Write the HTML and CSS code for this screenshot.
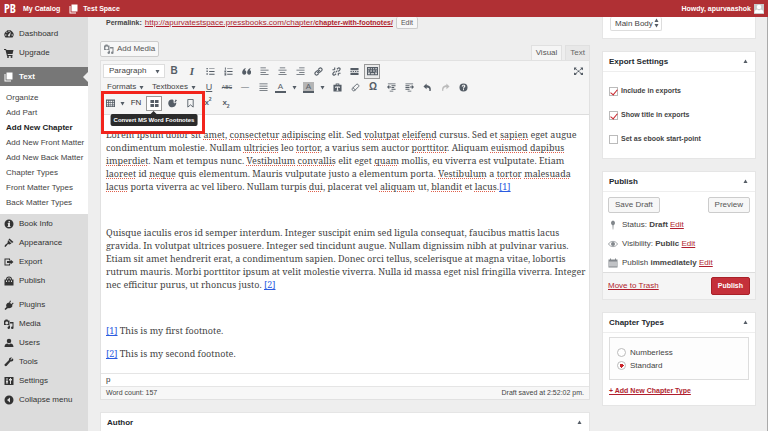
FILE: index.html
```html
<!DOCTYPE html>
<html lang="en">
  <head>
    <meta charset="UTF-8" />
    <meta name="viewport" content="width=device-width, initial-scale=1.0" />
    <title>Edit Chapter</title>
    <link rel="stylesheet" href="styles.css">
  </head>
  <body>
    <svg class="sprite" aria-hidden="true">
      <symbol id="i-book" viewBox="0 0 20 20"><path d="M5 1h12v14H5z" /><path d="M3 4v13h11v2H1V4z" /></symbol>
      <symbol id="i-dash" viewBox="0 0 20 20"><path fill-rule="evenodd" d="M3 17a9 9 0 1 1 14 0zM9 3v3h2V3zM4 6l2 2 1-1-2-2zM2 11v2h3v-2zM15 11v2h3v-2zM14 5l-5 6a2 2 0 1 0 3 2z" /></symbol>
      <symbol id="i-cart" viewBox="0 0 20 20"><path d="M0 2h4l1 2h14l-2 8H7l1 2h9v2H6L3 4H0z" /><circle cx="8" cy="18" r="2" /><circle cx="15" cy="18" r="2" /></symbol>
      <symbol id="i-info" viewBox="0 0 20 20"><path fill-rule="evenodd" d="M10 1a9 9 0 1 0 0 18 9 9 0 0 0 0-18zM9 4h3v3H9zM8 8h4v6h1v2H7v-2h1v-4H7z" /></symbol>
      <symbol id="i-brush" viewBox="0 0 20 20"><path d="M11 1l8 7-3 2-7-7zM8 4l7 7-4 2-3-1-5 6-2-1 1-3 5-4z" /></symbol>
      <symbol id="i-export" viewBox="0 0 20 20"><path d="M1 3h11v4h-2V5H3v10h7v-2h2v4H1z" /><path d="M6 8h7V5l6 5-6 5v-3H6z" /></symbol>
      <symbol id="i-bag" viewBox="0 0 20 20"><path fill-rule="evenodd" d="M1 7h3a6 6 0 0 1 12 0h3v12H1zM6 7h2a2 3 0 0 1 4 0h2a4 4 0 0 0-8 0zM4 9v3h2V9zM9 9v3h2V9zM14 9v3h2V9z" /></symbol>
      <symbol id="i-plug" viewBox="0 0 20 20"><path d="M12 1l2 1-2 4 3 2 3-3 1 2-3 3 1 2c-2 4-6 5-9 4l-5 4-2-2 4-4C3 10 5 6 9 5l1 1z" /></symbol>
      <symbol id="i-media" viewBox="0 0 20 20"><path fill-rule="evenodd" d="M0 3h2l1-2h4l1 2h3v9H0zM5 5a3 3 0 1 0 1 0z" /><path d="M12 6h7v11a2.500 2.500 0 1 1-2-2V9h-5zM9 13h3v4a2.500 2.500 0 1 1-3-2z" /></symbol>
      <symbol id="i-user" viewBox="0 0 20 20"><circle cx="10" cy="6" r="4.500" /><path d="M1 18c0-5 3-7 6-7l3 2 3-2c3 0 6 2 6 7z" /></symbol>
      <symbol id="i-wrench" viewBox="0 0 20 20"><path d="M17 3l-3 3-1-1 3-4c-4-1-7 2-6 5l-9 9c-1 2 2 4 4 3l8-9c4 1 7-2 5-6z" /></symbol>
      <symbol id="i-sliders" viewBox="0 0 20 20"><path fill-rule="evenodd" d="M1 2h18v16H1zM5 4v6H4v3h1v3h2v-3h1v-3H7V4zM12 4v2h-2v3h2v7h2V9h2V6h-2V4z" /></symbol>
      <symbol id="i-collapse" viewBox="0 0 20 20"><path fill-rule="evenodd" d="M10 1a9 9 0 1 0 0 18 9 9 0 0 0 0-18zM12 5v10l-6-5z" /></symbol>
      <symbol id="i-ul" viewBox="0 0 20 20"><path d="M1 2h3v3H1zM7 3h12v1H7zM1 8h3v3H1zM7 9h12v2H7zM1 14h3v3H1zM7 15h12v2H7z" /></symbol>
      <symbol id="i-ol" viewBox="0 0 20 20"><path d="M2 1h2v5H2zM7 3h12v1H7zM1 8h4v2L3 11h2v1H1zM7 9h12v2H7zM1 14h4v5H1v-1h2v-1H1zM7 15h12v2H7z" /></symbol>
      <symbol id="i-quote" viewBox="0 0 20 20"><path d="M8 2v2L6 7c5 0 5 10-1 10-7 0-6-12 3-15zM19 2v2l-2 3c5 0 4 10-1 10-7 0-6-12 3-15z" /></symbol>
      <symbol id="i-left" viewBox="0 0 20 20"><path d="M1 1h12v2H1zM1 6h18v2H1zM1 11h12v2H1zM1 16h18v2H1z" /></symbol>
      <symbol id="i-center" viewBox="0 0 20 20"><path d="M4 1h12v2H4zM1 6h18v2H1zM4 11h12v2H4zM1 16h18v2H1z" /></symbol>
      <symbol id="i-right" viewBox="0 0 20 20"><path d="M7 1h12v2H7zM1 6h18v2H1zM7 11h12v2H7zM1 16h18v2H1z" /></symbol>
      <symbol id="i-justify" viewBox="0 0 20 20"><path d="M1 1h18v2H1zM1 6h18v2H1zM1 11h18v2H1zM1 16h18v2H1z" /></symbol>
      <symbol id="i-link" viewBox="0 0 20 20"><g fill="none" stroke="currentColor" stroke-width="2.500"><path d="M9 6l3-3c3-3 8 1 5 5l-3 3c-2 2-4 1-5 0M11 14l-3 3c-3 3-8-1-5-5l3-3c2-2 4-1 5 0M7 13l6-6" /></g></symbol>
      <symbol id="i-unlink" viewBox="0 0 20 20"><g fill="none" stroke="currentColor" stroke-width="2.500"><path d="M11 5l2-2c3-3 7 1 4 4l-3 3M9 15l-2 2c-3 3-7-1-4-4l3-3M6 1v5M1 6h5M14 14v5M14 14h5M8 12l4-4" /></g></symbol>
      <symbol id="i-more" viewBox="0 0 20 20"><path d="M1 2h18v5H1zM1 9h3v2H1zM6 9h3v2H6zM11 9h3v2h-3zM16 9h3v2h-3zM1 13h18v5H1z" /></symbol>
      <symbol id="i-keys" viewBox="0 0 20 20"><path fill-rule="evenodd" d="M0 2h20v15H0zM2 4v2h3V4zM7 4v2h2V4zM11 4v2h2V4zM15 4v2h3V4zM2 8v2h2V8zM6 8v2h3V8zM11 8v2h3V8zM16 8v2h2V8zM2 12v3h3v-3zM7 13v2h6v-2zM15 12v3h3v-3z" /></symbol>
      <symbol id="i-full" viewBox="0 0 20 20"><path d="M0 1h6L4 3l4 4-1 1-4-3-3 2zM20 1h-6l2 2-4 4 1 1 4-3 3 2zM0 18h6l-2-2 4-3-1-2-4 3-3-2zM20 18h-6l2-2-4-3 1-2 4 3 3-2zM8 8h4v3H8z" /></symbol>
      <symbol id="i-paste" viewBox="0 0 20 20"><path fill-rule="evenodd" d="M1 4h5V1h8v3h5v15H1zM8 3v1h4V3zM5 8v3h2v-1h2v5H8v2h4v-2h-1v-5h2v1h2V8z" /></symbol>
      <symbol id="i-eraser" viewBox="0 0 20 20"><path fill="none" stroke="currentColor" stroke-width="2" d="M3 12l9-9c2-2 7 2 5 5l-9 9c-3 2-7-2-5-5zM4 10l6 6" /></symbol>
      <symbol id="i-outdent" viewBox="0 0 20 20"><path d="M2 1h17v2H2zM10 5h9v2h-9zM10 9h6v2h-6zM10 13h9v2h-9zM6 17h8v2H6zM0 9l5-5v4h4v2H5v4z" /></symbol>
      <symbol id="i-indent" viewBox="0 0 20 20"><path d="M1 1h17v2H1zM1 5h9v2H1zM1 9h9v2H1zM1 13h9v2H1zM6 17h8v2H6zM20 9l-5-5v4h-4v2h4v4z" /></symbol>
      <symbol id="i-undo" viewBox="0 0 20 20"><path d="M8 1v4c7 0 11 5 9 13h-3c1-6-1-8-6-8v4L1 8z" /></symbol>
      <symbol id="i-redo" viewBox="0 0 20 20"><path d="M12 1v4C5 5 1 10 3 18h2c0-6 2-9 7-9v5l7-6z" /></symbol>
      <symbol id="i-help" viewBox="0 0 20 20"><path fill-rule="evenodd" d="M10 1a9 9 0 1 0 0 18 9 9 0 0 0 0-18zM6 8c0-6 9-5 8-1 0 3-3 2-3 5H9c0-4 3-4 2-6-1-1-2 0-2 2zM9 13h2v3H9z" /></symbol>
      <symbol id="i-table" viewBox="0 0 20 20"><path fill-rule="evenodd" d="M0 1h20v17H0zM2 4v3h3V4zM7 4v3h3V4zM11 4v3h3V4zM16 4v3h2V4zM2 9v3h3V9zM7 9v3h3V9zM11 9v3h3V9zM16 9v3h2V9zM2 14v2h3v-2zM7 14v2h3v-2zM11 14v2h3v-2zM16 14v2h2v-2z" /></symbol>
      <symbol id="i-grid" viewBox="0 0 20 20"><path d="M1 2h8v7H1zM11 2h8v7h-8zM1 11h8v7H1zM11 11h8v7h-8z" /></symbol>
      <symbol id="i-palette" viewBox="0 0 20 20"><path d="M12 2C4-1-1 6 1 12c2 8 13 8 16 2 1-3 2-4 1-6-2 2-4 2-5 1s0-4-1-7z" /><path d="M14 7l3-6 3 2-4 5z" /></symbol>
      <symbol id="i-mark" viewBox="0 0 20 20"><path fill="none" stroke="currentColor" stroke-width="2" d="M4 1h12v17l-6-5-6 5z" /></symbol>
      <symbol id="i-pin" viewBox="0 0 20 20"><path d="M10 1a5 5 0 0 1 1 9.500L10.500 19h-1L9 10.500A5 5 0 0 1 10 1z" /></symbol>
      <symbol id="i-eye" viewBox="0 0 20 20"><path fill="none" stroke="currentColor" stroke-width="1.500" d="M1 10c4-7 14-7 18 0-4 7-14 7-18 0z" /><circle cx="10" cy="10" r="4" /></symbol>
      <symbol id="i-cal" viewBox="0 0 20 20"><path fill-rule="evenodd" d="M1 3h3V1h2v2h8V1h2v2h3v16H1zM3 7v10h2V7zM7 7v10h2V7zM11 7v10h2V7zM15 7v10h2V7z" /></symbol>
      <symbol id="i-caret" viewBox="0 0 10 10"><path d="M1 2h8L5 9z" /></symbol>
    </svg>

    <header class="adminBar">
      <a href="#" class="logo">PB</a>
      <a href="#">My Catalog</a>
      <a href="#" class="site"><svg class="icon"><use href="#i-book" /></svg>Test Space</a>
      <a href="#" class="account">Howdy, apurvaashok
        <span class="avatar"><svg class="icon"><use href="#i-user" /></svg></span>
      </a>
    </header>

    <div class="page">
      <nav class="sidebar">
        <ul class="menu">
          <li><a href="#"><svg class="icon"><use href="#i-dash" /></svg>Dashboard</a></li>
          <li><a href="#"><svg class="icon"><use href="#i-cart" /></svg>Upgrade</a></li>
          <li class="active"><a href="#"><svg class="icon"><use href="#i-book" /></svg>Text</a></li>
        </ul>
        <ul class="submenu">
          <li><a href="#">Organize</a></li>
          <li><a href="#">Add Part</a></li>
          <li class="current"><a href="#">Add New Chapter</a></li>
          <li><a href="#">Add New Front Matter</a></li>
          <li><a href="#">Add New Back Matter</a></li>
          <li><a href="#">Chapter Types</a></li>
          <li><a href="#">Front Matter Types</a></li>
          <li><a href="#">Back Matter Types</a></li>
        </ul>
        <ul class="menu">
          <li><a href="#"><svg class="icon"><use href="#i-info" /></svg>Book Info</a></li>
          <li><a href="#"><svg class="icon"><use href="#i-brush" /></svg>Appearance</a></li>
          <li><a href="#"><svg class="icon"><use href="#i-export" /></svg>Export</a></li>
          <li><a href="#"><svg class="icon"><use href="#i-bag" /></svg>Publish</a></li>
          <li class="group"><a href="#"><svg class="icon"><use href="#i-plug" /></svg>Plugins</a></li>
          <li><a href="#"><svg class="icon"><use href="#i-media" /></svg>Media</a></li>
          <li><a href="#"><svg class="icon"><use href="#i-user" /></svg>Users</a></li>
          <li><a href="#"><svg class="icon"><use href="#i-wrench" /></svg>Tools</a></li>
          <li><a href="#"><svg class="icon"><use href="#i-sliders" /></svg>Settings</a></li>
          <li><button class="collapse"><svg class="icon"><use href="#i-collapse" /></svg>Collapse menu</button></li>
        </ul>
      </nav>

      <main class="content">
        <div class="permalink">
          <strong>Permalink:</strong>
          <a href="#">http://apurvatestspace.pressbooks.com/chapter/<b>chapter-with-footnotes/</b></a>
          <button class="btn small">Edit</button>
        </div>
        <div class="editorTop">
          <button class="btn addMedia"><svg class="icon"><use href="#i-media" /></svg>Add Media</button>
          <div class="tabs">
            <button class="tab active">Visual</button>
            <button class="tab">Text</button>
          </div>
        </div>

        <section class="editor">
          <div class="toolbar">
            <div class="row">
              <button class="format">Paragraph <svg class="caret"><use href="#i-caret" /></svg></button>
              <button class="tool bold">B</button>
              <button class="tool italic">I</button>
              <button class="tool" aria-label="Bulleted list"><svg class="icon"><use href="#i-ul" /></svg></button>
              <button class="tool" aria-label="Numbered list"><svg class="icon"><use href="#i-ol" /></svg></button>
              <button class="tool" aria-label="Blockquote"><svg class="icon"><use href="#i-quote" /></svg></button>
              <button class="tool" aria-label="Align left"><svg class="icon"><use href="#i-left" /></svg></button>
              <button class="tool" aria-label="Align center"><svg class="icon"><use href="#i-center" /></svg></button>
              <button class="tool" aria-label="Align right"><svg class="icon"><use href="#i-right" /></svg></button>
              <button class="tool" aria-label="Insert link"><svg class="icon"><use href="#i-link" /></svg></button>
              <button class="tool" aria-label="Remove link"><svg class="icon"><use href="#i-unlink" /></svg></button>
              <button class="tool" aria-label="Read more"><svg class="icon"><use href="#i-more" /></svg></button>
              <button class="tool pressed" aria-label="Toolbar toggle"><svg class="icon"><use href="#i-keys" /></svg></button>
              <button class="tool fullscreen" aria-label="Fullscreen"><svg class="icon"><use href="#i-full" /></svg></button>
            </div>
            <div class="row">
              <button class="drop formats">Formats <svg class="caret"><use href="#i-caret" /></svg></button>
              <button class="drop textboxes">Textboxes <svg class="caret"><use href="#i-caret" /></svg></button>
              <button class="tool underline">U</button>
              <button class="tool strike">ABC</button>
              <button class="tool">—</button>
              <button class="tool" aria-label="Justify"><svg class="icon"><use href="#i-justify" /></svg></button>
              <button class="tool split"><span class="color">A</span><svg class="caret"><use href="#i-caret" /></svg></button>
              <button class="tool split"><span class="color filled">A</span><svg class="caret"><use href="#i-caret" /></svg></button>
              <button class="tool" aria-label="Paste as text"><svg class="icon"><use href="#i-paste" /></svg></button>
              <button class="tool" aria-label="Clear formatting"><svg class="icon"><use href="#i-eraser" /></svg></button>
              <button class="tool omega">Ω</button>
              <button class="tool" aria-label="Outdent"><svg class="icon"><use href="#i-outdent" /></svg></button>
              <button class="tool" aria-label="Indent"><svg class="icon"><use href="#i-indent" /></svg></button>
              <button class="tool" aria-label="Undo"><svg class="icon"><use href="#i-undo" /></svg></button>
              <button class="tool disabled" aria-label="Redo"><svg class="icon"><use href="#i-redo" /></svg></button>
              <button class="tool" aria-label="Help"><svg class="icon"><use href="#i-help" /></svg></button>
            </div>
            <div class="row">
              <button class="tool table" aria-label="Table"><svg class="icon"><use href="#i-table" /></svg><svg class="caret"><use href="#i-caret" /></svg></button>
              <button class="tool fn">FN</button>
              <div class="tipWrap">
                <button class="tool hovered" aria-label="Convert footnotes"><svg class="icon"><use href="#i-grid" /></svg></button>
                <span class="tooltip">Convert MS Word Footnotes</span>
              </div>
              <button class="tool" aria-label="Theme"><svg class="icon"><use href="#i-palette" /></svg></button>
              <button class="tool" aria-label="Anchor"><svg class="icon"><use href="#i-mark" /></svg></button>
              <button class="tool script"><span>x<sup>2</sup></span></button>
              <button class="tool script"><span>x<sub>2</sub></span></button>
            </div>
            <div class="highlight"></div>
          </div>

          <div class="text">
            <p>
              Lorem ipsum dolor sit <u>amet</u>, <u>consectetur</u> <u>adipiscing</u> elit. Sed <u>volutpat</u> <u>eleifend</u> cursus. Sed et <u>sapien</u> eget augue<br>
              condimentum molestie. Nullam <u>ultricies</u> leo <u>tortor</u>, a varius sem auctor <u>porttitor</u>. Aliquam <u>euismod</u> <u>dapibus</u><br>
              <u>imperdiet</u>. Nam et tempus nunc. <u>Vestibulum</u> <u>convallis</u> elit eget <u>quam</u> mollis, eu viverra est vulputate. Etiam<br>
              <u>laoreet</u> id <u>neque</u> quis elementum. Mauris vulputate justo a elementum porta. <u>Vestibulum</u> a <u>tortor</u> <u>malesuada</u><br>
              <u>lacus</u> porta viverra ac vel libero. Nullam turpis <u>dui</u>, placerat vel <u>aliquam</u> ut, <u>blandit</u> et <u>lacus</u>.<a href="#">[1]</a>
            </p>
            <p>&nbsp;</p>
            <p>
              Quisque iaculis eros id semper interdum. Integer suscipit enim sed ligula consequat, faucibus mattis lacus<br>
              gravida. In volutpat ultrices posuere. Integer sed tincidunt augue. Nullam dignissim nibh at pulvinar varius.<br>
              Etiam sit amet hendrerit erat, a condimentum sapien. Donec orci tellus, scelerisque at magna vitae, lobortis<br>
              rutrum mauris. Morbi porttitor ipsum at velit molestie viverra. Nulla id massa eget nisl fringilla viverra. Integer<br>
              nec efficitur purus, ut rhoncus justo. <a href="#">[2]</a>
            </p>
            <p>&nbsp;</p>
            <p><a href="#">[1]</a> This is my first footnote.</p>
            <p><a href="#">[2]</a> This is my second footnote.</p>
          </div>
          <div class="path">p</div>
          <div class="status"><span>Word count: 157</span><span>Draft saved at 2:52:02 pm.</span></div>
        </section>

        <section class="box">
          <h2>Author <svg class="caret up"><use href="#i-caret" /></svg></h2>
        </section>
      </main>

      <aside class="side">
        <section class="box part">
          <select aria-label="Part"><option>Main Body</option></select>
          <span class="arrows"><svg class="caret up"><use href="#i-caret" /></svg><svg class="caret"><use href="#i-caret" /></svg></span>
        </section>

        <section class="box">
          <h2>Export Settings <svg class="caret up"><use href="#i-caret" /></svg></h2>
          <div class="checks">
            <label><input type="checkbox" checked> Include in exports</label>
            <label><input type="checkbox" checked> Show title in exports</label>
            <label><input type="checkbox"> Set as ebook start-point</label>
          </div>
        </section>

        <section class="box">
          <h2>Publish <svg class="caret up"><use href="#i-caret" /></svg></h2>
          <div class="publish">
            <div class="actions">
              <button class="btn">Save Draft</button>
              <button class="btn">Preview</button>
            </div>
            <p><svg class="icon"><use href="#i-pin" /></svg><span>Status: <b>Draft</b> <a href="#">Edit</a></span></p>
            <p><svg class="icon"><use href="#i-eye" /></svg><span>Visibility: <b>Public</b> <a href="#">Edit</a></span></p>
            <p><svg class="icon"><use href="#i-cal" /></svg><span>Publish <b>immediately</b> <a href="#">Edit</a></span></p>
          </div>
          <div class="major">
            <a href="#">Move to Trash</a>
            <button class="btn primary">Publish</button>
          </div>
        </section>

        <section class="box">
          <h2>Chapter Types <svg class="caret up"><use href="#i-caret" /></svg></h2>
          <div class="types">
            <div class="radios">
              <label><input type="radio" name="type"> Numberless</label>
              <label><input type="radio" name="type" checked> Standard</label>
            </div>
            <a href="#">+ Add New Chapter Type</a>
          </div>
        </section>
      </aside>
    </div>
  </body>
</html>
```
FILE: styles.css
```css
* {
  box-sizing: border-box;
}
body {
  margin: 0;
  height: 100vh;
  overflow: hidden;
  display: flex;
  flex-direction: column;
  font-family: "Liberation Sans", Arial, sans-serif;
  font-size: 8px;
  line-height: 12px;
  color: #444;
  background-color: #eee;
}
ul,
p,
h2 {
  margin: 0;
  padding: 0;
  list-style: none;
}
button,
input,
select {
  margin: 0;
  padding: 0;
  font: inherit;
  color: inherit;
  background: none;
  border: none;
}
a {
  color: #b01e2e;
}
.sprite {
  position: absolute;
  width: 0;
  height: 0;
}
.icon {
  width: 10px;
  height: 10px;
  flex-shrink: 0;
  fill: currentColor;
}
.caret {
  width: 5px;
  height: 5px;
  flex-shrink: 0;
  fill: #555d66;
}
.caret.up {
  rotate: 180deg;
}

/* admin bar */
.adminBar {
  height: 17px;
  flex-shrink: 0;
  display: flex;
  align-items: center;
  padding: 0 4px;
  background-color: #b03034;
  font-weight: bold;
  font-size: 7px;
}
.adminBar a {
  color: #fff;
  text-decoration: none;
  display: flex;
  align-items: center;
}
.adminBar .logo {
  width: 19px;
  font-family: "Liberation Sans Narrow", "Open Sans Condensed", "DejaVu Sans Condensed", sans-serif;
  font-size: 12px;
}
.adminBar .site {
  margin-left: 9px;
  gap: 4px;
}
.adminBar .account {
  margin-left: auto;
  gap: 3px;
}
.avatar {
  width: 10px;
  height: 10px;
  display: flex;
  background-color: #c9c9c9;
}

/* sidebar */
.page {
  flex: 1;
  min-height: 0;
  display: flex;
  border-right: 1px solid #aaa;
}
.sidebar {
  width: 88px;
  flex-shrink: 0;
  padding-top: 7px;
  background-color: #dcdcdc;
}
.menu a,
.collapse {
  height: 19px;
  display: flex;
  align-items: center;
  gap: 5px;
  padding-left: 4px;
  color: #333;
  text-decoration: none;
}
.menu .group {
  margin-top: 5px;
}
.menu .active {
  margin-top: 5px;
  position: relative;
}
.menu .active a {
  color: #fff;
  font-weight: bold;
  background-color: #777;
}
.menu .active::after {
  content: "";
  position: absolute;
  right: 0;
  top: 5px;
  border: 5px solid transparent;
  border-left: none;
  border-right-color: #eee;
}
.submenu {
  padding: 4px 6px;
  background-color: #fff;
}
.submenu a {
  display: block;
  line-height: 15px;
  color: #444;
  text-decoration: none;
  white-space: nowrap;
}
.submenu .current a {
  font-weight: bold;
  color: #222;
}

/* editor column */
.content {
  flex: 1;
  min-width: 0;
  padding: 0 12px;
}
.permalink {
  height: 12px;
  display: flex;
  align-items: center;
  gap: 3px;
  padding-left: 6px;
  white-space: nowrap;
}
.permalink strong,
.permalink b {
  font-size: 7px;
}
.btn {
  height: 16px;
  padding: 0 6px;
  display: flex;
  align-items: center;
  border: 1px solid #ccc;
  border-radius: 2px;
  color: #555;
  background-color: #f7f7f7;
}
.btn.small {
  height: 12px;
  padding: 0 4px;
  font-size: 7px;
  border-top: none;
}
.editorTop {
  display: flex;
  justify-content: space-between;
  align-items: flex-end;
  padding-top: 12px;
  height: 31px;
}
.addMedia {
  gap: 3px;
  padding: 0 3px;
  margin-bottom: 3px;
}
.addMedia .icon {
  color: #82878c;
}
.tabs {
  display: flex;
  gap: 3px;
}
.tab {
  height: 15px;
  padding: 0 4px;
  color: #666;
  background-color: #e8e8e8;
  border: 1px solid #e0e0e0;
  border-bottom: none;
}
.tab.active {
  color: #555;
  background-color: #f5f5f5;
}
.editor {
  border: 1px solid #e1e1e1;
  background-color: #fff;
  margin-bottom: 12px;
}
.toolbar {
  position: relative;
  padding: 2px 2px 3px;
  background-color: #f5f5f5;
  border-bottom: 1px solid #ddd;
}
.row {
  height: 16px;
  display: flex;
  align-items: center;
}
.format {
  width: 62px;
  height: 14px;
  display: flex;
  align-items: center;
  justify-content: space-between;
  padding: 0 4px 0 5px;
  background-color: #fff;
  border: 1px solid #ddd;
}
.tool {
  width: 18px;
  height: 15px;
  display: flex;
  align-items: center;
  justify-content: center;
  color: #555d66;
}
.tool .icon {
  width: 9px;
  height: 9px;
}
.pressed,
.hovered {
  width: 16px;
  margin: 0 1px;
  border: 1px solid #999;
  background-color: #ebebeb;
}
.tool.pressed .icon {
  width: 11px;
  height: 11px;
}
.hovered {
  background-color: #fff;
}
.bold {
  font-weight: bold;
  font-size: 10px;
}
.italic {
  font-family: "Liberation Serif", serif;
  font-style: italic;
  font-weight: bold;
  font-size: 11px;
}
.underline {
  font-size: 9px;
  text-decoration: underline;
}
.strike {
  font-size: 5px;
  text-decoration: line-through;
}
.omega {
  font-size: 10px;
  font-weight: bold;
}
.disabled {
  color: #bbb;
}
.fullscreen {
  margin-left: auto;
}
.drop {
  display: flex;
  align-items: center;
  justify-content: space-between;
  padding: 0 4px;
}
.formats {
  width: 45px;
}
.textboxes {
  width: 52px;
}
.split {
  width: 28px;
  gap: 6px;
}
.color {
  width: 11px;
  line-height: 9px;
  border-bottom: 2px solid #555d66;
}
.filled {
  background-color: #b5b5b5;
}
.table {
  width: 24px;
  gap: 5px;
}
.fn {
  color: #333;
}
.script {
  font-weight: bold;
}
.script sup,
.script sub {
  font-size: 5px;
  line-height: 5px;
}
.tipWrap {
  position: relative;
}
.tooltip {
  position: absolute;
  z-index: 2;
  top: 18px;
  left: 50%;
  translate: -50%;
  padding: 0 3px;
  border-radius: 2px;
  font-size: 6px;
  font-weight: bold;
  color: #fff;
  background-color: #2b2b2b;
  white-space: nowrap;
}
.tooltip::before {
  content: "";
  position: absolute;
  left: 50%;
  top: -3px;
  translate: -50%;
  border: 3px solid transparent;
  border-top: none;
  border-bottom-color: #2b2b2b;
}
.highlight {
  position: absolute;
  z-index: 3;
  left: 0;
  top: 30px;
  width: 104px;
  height: 43px;
  border: 3px solid #f2241c;
  pointer-events: none;
}
.text {
  height: 258px;
  padding: 13px 5px;
  font-family: "Noto Serif", "DejaVu Serif Condensed", "DejaVu Serif", serif;
  font-size: 9px;
  line-height: 13px;
  white-space: nowrap;
}
.text p {
  margin-bottom: 10px;
}
.text u {
  text-decoration: underline dotted #e0604c;
}
.text a {
  color: #2b5be0;
}
.path {
  padding: 0 5px;
  border-top: 1px solid #e5e5e5;
  color: #333;
}
.status {
  display: flex;
  justify-content: space-between;
  padding: 0 5px;
  font-size: 7px;
  border-top: 1px solid #e5e5e5;
  background-color: #f7f7f7;
}

/* boxes */
.box {
  background-color: #fff;
  border: 1px solid #e5e5e5;
  margin-bottom: 12px;
}
.box h2 {
  height: 20px;
  display: flex;
  align-items: center;
  justify-content: space-between;
  padding: 0 7px 0 6px;
  font-size: 8px;
  color: #23282d;
  border-bottom: 1px solid #eee;
}
.side {
  width: 165px;
  flex-shrink: 0;
  padding-right: 11px;
}
.part {
  position: relative;
  border-top: none;
  padding: 0 7px 7px;
}
.part select {
  display: block;
  width: 52px;
  height: 14px;
  padding-left: 4px;
  appearance: none;
  border: 1px solid #ddd;
  border-top: none;
  border-radius: 2px;
}
.arrows {
  position: absolute;
  left: 51px;
  top: 1px;
  display: flex;
  flex-direction: column;
  pointer-events: none;
}
.checks {
  padding: 13px 6px 13px;
  display: flex;
  flex-direction: column;
  gap: 12px;
  font-size: 7px;
  font-weight: bold;
}
.checks label,
.radios label {
  display: flex;
  align-items: center;
  gap: 3px;
}
.checks input,
.radios input {
  appearance: none;
  width: 9px;
  height: 9px;
  border: 1px solid #bbb;
  background-color: #fff;
}
.checks input:checked::before {
  content: "";
  display: block;
  width: 3px;
  height: 6px;
  margin: 0 2px;
  border: solid #c9242b;
  border-width: 0 1px 1px 0;
  rotate: 40deg;
}
.publish {
  padding: 5px 5px 0;
}
.actions {
  display: flex;
  justify-content: space-between;
  margin-bottom: 2px;
}
.publish p {
  height: 19px;
  display: flex;
  align-items: center;
  gap: 4px;
}
.publish .icon {
  color: #82878c;
}
.major {
  display: flex;
  align-items: center;
  justify-content: space-between;
  padding: 4px 5px;
  background-color: #f5f5f5;
  border-top: 1px solid #ddd;
}
.btn.primary {
  height: 18px;
  font-size: 7px;
  color: #fff;
  font-weight: bold;
  background-color: #c5303a;
  border-color: #a82028;
}
.types {
  padding: 4px 6px 8px;
}
.types > a {
  font-size: 7px;
  font-weight: bold;
}
.radios {
  padding: 8px 7px 7px;
  margin-bottom: 5px;
  border: 1px solid #ddd;
  background-color: #fdfdfd;
}
.radios label {
  height: 13px;
  gap: 4px;
}
.radios input {
  border-radius: 50%;
}
.radios input:checked {
  background: radial-gradient(#c9242b 2px, #fff 2px);
}
```
